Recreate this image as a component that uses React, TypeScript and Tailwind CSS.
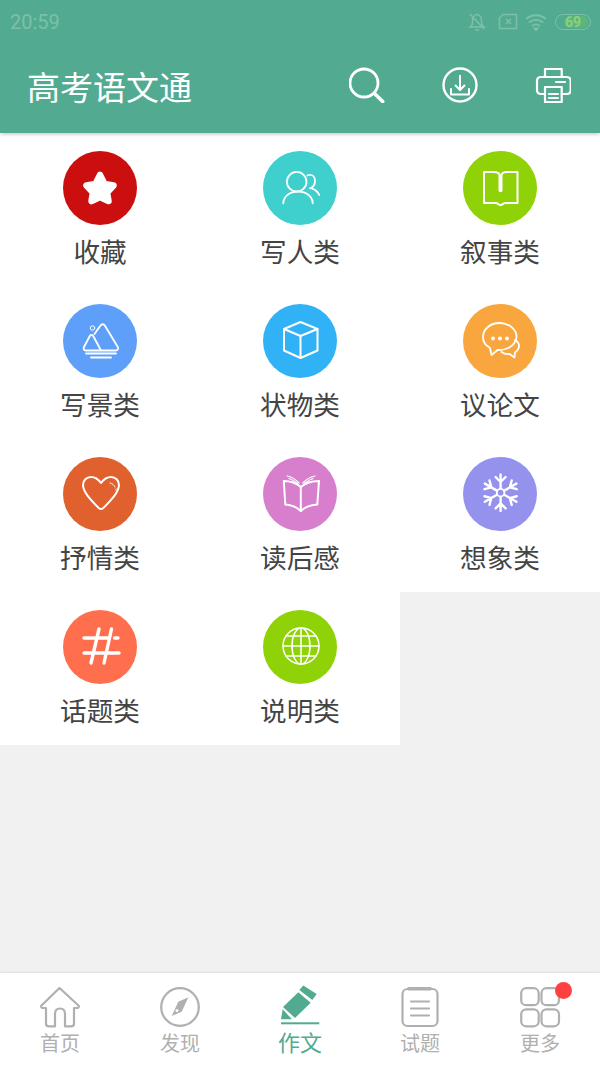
import React from "react";

const white = { fill: "none", stroke: "#fff", strokeLinecap: "round", strokeLinejoin: "round" } as const;

const StarIcon = () => (
  <polygon
    points="37,24 41.5,33 50.5,34.5 44,41.5 45.5,50 37,46 28.5,50 30,41.5 23.5,34.5 32.5,33"
    fill="#fff"
    stroke="#fff"
    strokeWidth="6.500"
    strokeLinejoin="round"
  />
);

const PeopleIcon = () => (
  <g {...white} strokeWidth="1.800">
    <circle cx="33.700" cy="30.700" r="9.800" />
    <path d="M20.300 52.300c0-6.800 6-11.600 14.700-11.600s14.700 4.800 14.700 11.600" />
    <path d="M44.300 24.500c1-.5 1.800-.7 2.700-.7 3 0 5 2.800 5 6 0 3.500-2 6.500-5 7.500" />
    <path d="M48.700 37.300c3.500 1.200 6.300 3.700 7.600 6.700" />
  </g>
);

const BookIcon = () => (
  <g {...white} strokeWidth="2">
    <path d="M21 21h10c3 0 5 1 5.500 3v15.500c0 1 2 1 2 0V24c.5-2 2.500-3 5-3h11v31H42c-1.500 0-2.500 2-4.500 2s-3-2-4.500-2H21z" />
  </g>
);

const ScenicIcon = () => (
  <g {...white} strokeWidth="1.800">
    <circle cx="29.500" cy="24" r="2.200" strokeWidth="1" />
    <path d="M31.500 30l6-8.500c1.200-1.700 3.300-1.700 4.300 0l13 21.500c1 2-.2 3.500-2 3.500H23c-2 0-3-1.500-2-3.500l5.500-10.500c1-2 3-2 4 0L38 46.500" />
    <path d="M23 49.500h30M28 53.500h20" />
  </g>
);

const CubeIcon = () => (
  <g {...white} strokeWidth="2">
    <path d="M37.500 18L54.500 25V46.500L37.500 54 21 46.500V25z" />
    <path d="M21 25l16.500 7 17-7M37.500 32v22" />
  </g>
);

const ChatIcon = () => (
  <g>
    <g {...white} strokeWidth="1.800">
      <path d="M36.500 19C27.500 19 20 25 20 33c0 4.500 2.500 8.500 7 11l1.500 7 6-5c.7 0 1.300 0 2 0 9 0 17-6 17-13.500S45.500 19 36.500 19z" />
      <path d="M52 36c3 1.500 4 3.500 4 6 0 3-2 5-4 6.500l-.5 5-5-3.500c-3 .5-6-.5-8-2" />
    </g>
    <circle cx="30" cy="34.500" r="2" fill="#fff" />
    <circle cx="37" cy="34.500" r="2" fill="#fff" />
    <circle cx="44" cy="34.500" r="2" fill="#fff" />
  </g>
);

const HeartIcon = () => (
  <g {...white} strokeWidth="2">
    <path d="M38 52c-1 0-2-.5-3-1.700C28 43 20 35 20 28c0-4.500 3.500-8 8-8 4 0 7.500 2.500 10 6 2.500-3.500 6-6 10-6 4.500 0 8 3.500 8 8 0 7-8 15-15 22.300-1 1.200-2 1.700-3 1.700z" />
    <path d="M47 26c2.500.5 4 2 5 4" strokeWidth="1" />
    <path d="M53 32v1" strokeWidth="1" />
  </g>
);

const OpenBookIcon = () => (
  <g {...white} strokeWidth="2">
    <path d="M37.800 30c-4-3.500-10-6-17-6l1.500 23.500c6 .5 11.500 2.500 15.500 6.500 4-4 9.500-6 16.500-6.500L56 24c-7.500 0-14 2.500-18.200 6z" />
    <path d="M37.800 30v24" />
    <path d="M24 19c4.500 1 9 3.500 12 7M26 21.500c3 1 6 3 8.500 5M52 19c-4.500 1-9 3.500-12 7M50 21.500c-3 1-6 3-8.500 5" strokeWidth="1.200" />
  </g>
);

const SnowflakeIcon = () => (
  <g {...white} strokeWidth="2.400">
    <circle cx="37.600" cy="35.700" r="3.800" strokeWidth="1.800" />
    {[0, 60, 120, 180, 240, 300].map((deg) => (
      <g key={deg} transform={`rotate(${deg} 37.600 35.700)`}>
        <path d="M37.600 31.500V17.500M37.600 25l-5-5M37.600 25l5-5" />
      </g>
    ))}
  </g>
);

const HashIcon = () => (
  <g {...white} strokeWidth="3.400">
    <path d="M21 28h24M51.500 28h3.500M21 43h35M36 19L28 53M48.500 19L41 53" />
  </g>
);

const GlobeIcon = () => (
  <g {...white} strokeWidth="1.500">
    <circle cx="38" cy="36" r="18" />
    <ellipse cx="38" cy="36" rx="9" ry="18" />
    <path d="M38 18v36M20 36h36M23 26h30M23 46h30" />
  </g>
);

const categories = [
  { label: "收藏", bg: "bg-[#cb0e0e]", icon: <StarIcon /> },
  { label: "写人类", bg: "bg-[#3fcfcd]", icon: <PeopleIcon /> },
  { label: "叙事类", bg: "bg-[#8fd208]", icon: <BookIcon /> },
  { label: "写景类", bg: "bg-[#5e9ffa]", icon: <ScenicIcon /> },
  { label: "状物类", bg: "bg-[#31b2f6]", icon: <CubeIcon /> },
  { label: "议论文", bg: "bg-[#f8a63d]", icon: <ChatIcon /> },
  { label: "抒情类", bg: "bg-[#e0602e]", icon: <HeartIcon /> },
  { label: "读后感", bg: "bg-[#d77fcd]", icon: <OpenBookIcon /> },
  { label: "想象类", bg: "bg-[#9492ed]", icon: <SnowflakeIcon /> },
  { label: "话题类", bg: "bg-[#ff6f4d]", icon: <HashIcon /> },
  { label: "说明类", bg: "bg-[#8fd208]", icon: <GlobeIcon /> },
];

const gray = { fill: "none", stroke: "#b0b0b0", strokeWidth: 2.200, strokeLinejoin: "round", strokeLinecap: "round" } as const;

const tabs = [
  {
    label: "首页",
    icon: (
      <path
        {...gray}
        d="M19.500 1L38.500 18.500c.8 1 .2 2.500-1.200 2.500H34v15.500c0 1.800-1 2.800-2.800 2.800H25V27c0-3.500-2-5.500-5-5.500S15 23.500 15 27v12.300H8.800C7 39.300 6 38.300 6 36.500V21H2.700C1.300 21 .7 19.500 1.500 18.500z"
      />
    ),
  },
  {
    label: "发现",
    icon: (
      <g>
        <circle cx="20" cy="20" r="18.800" {...gray} />
        <path d="M28.300 10.300L18.300 14.700 11.700 29l10-4.300z" fill="#b0b0b0" />
        <circle cx="17" cy="23.500" r="1.500" fill="#fff" />
      </g>
    ),
  },
  {
    label: "作文",
    active: true,
    icon: (
      <g fill="#52ab90">
        <path d="M23.300-1.500L36.700 7 32.300 13 19.300 3z" />
        <path d="M18.300 5.300L30.700 15.700 15 31 3 20z" />
        <path d="M2.700 22.300L12 32.300 1 32.300z" />
        <rect x="1" y="35.300" width="38.300" height="2" />
      </g>
    ),
  },
  {
    label: "试题",
    icon: (
      <g>
        <rect x="2.500" y="2" width="35" height="37" rx="5" {...gray} />
        <rect x="7.500" y="0" width="24" height="3.500" rx="1" fill="#b0b0b0" />
        <path d="M11 14.500h18M11 21.500h18M11 28.500h18" {...gray} />
      </g>
    ),
  },
  {
    label: "更多",
    icon: (
      <g {...gray}>
        <rect x="1.200" y="1.200" width="17.500" height="17" rx="5" />
        <rect x="21.500" y="1.200" width="17.500" height="17" rx="5" />
        <rect x="1.200" y="22.300" width="17.500" height="17" rx="5" />
        <rect x="21.500" y="22.300" width="17.500" height="17" rx="5" />
      </g>
    ),
  },
];

export default function App() {
  return (
    <div className="flex h-[1067px] w-[600px] flex-col overflow-hidden bg-[#f1f1f1] font-['Noto_Sans_CJK_SC','Noto_Sans',sans-serif]">
      <header className="relative z-10 h-[133px] shrink-0 bg-[#52ab90] shadow-[0_1px_4px_rgba(0,0,0,0.25)]">
        <div className="flex h-[44px] items-center justify-between pl-[10px] pr-[9px] text-[#7cc0aa]">
          <span className="font-['Roboto',sans-serif] text-[20px] leading-none">20:59</span>
          <div className="flex items-center">
            <svg width="20" height="20" viewBox="0 0 20 20" fill="none" stroke="#7cc0aa" strokeWidth="1.500">
              <path d="M3 15c1.500-1 2.500-2 2.500-4V8c0-3 2.500-5.500 4.500-5.500S14.500 5 14.500 8v3c0 2 1 3 2.500 4zM8 18h4M3 2l14 15" />
            </svg>
            <svg width="20" height="18" viewBox="0 0 20 18" fill="none" stroke="#7cc0aa" strokeWidth="1.500" className="ml-[11px]">
              <path d="M5 1.500h13.500v14H1.500V5zM8 6l5 5M13 6l-5 5" />
            </svg>
            <svg width="22" height="18" viewBox="0 0 22 18" fill="none" stroke="#7cc0aa" strokeWidth="1.800" className="ml-[7px]">
              <path d="M1 6c6-5 14-5 20 0M4 9.500c4-3.500 10-3.500 14 0M7 13c2.500-2 5.500-2 8 0" />
              <path d="M9.500 15.500l1.500 2 1.500-2z" fill="#7cc0aa" />
            </svg>
            <div className="relative ml-[8px] h-[16px] w-[36px] overflow-hidden rounded-full border border-[#7cc0aa]">
              <div className="absolute inset-y-[1px] left-[8px] w-[24px] rounded-full bg-[#5db57a]" />
              <span className="absolute inset-0 text-center font-['Roboto',sans-serif] text-[14px] leading-[14px] font-bold text-[#8fce83]">69</span>
            </div>
          </div>
        </div>
        <div className="flex items-center justify-between pt-[4px] pl-[27px] pr-[29px]">
          <h1 className="text-[33px] leading-[76px] font-normal text-white">高考语文通</h1>
          <div className="mb-[2px] flex items-center gap-[57px]">
            <svg width="36" height="36" viewBox="0 0 36 36" fill="none" stroke="#fff" strokeLinecap="round">
              <circle cx="15" cy="16" r="14" strokeWidth="2.800" />
              <path d="M25.500 26.500l8.200 8" strokeWidth="3.600" />
            </svg>
            <svg width="36" height="36" viewBox="0 0 36 36" fill="none" stroke="#fff" strokeWidth="2.400" strokeLinecap="round" strokeLinejoin="round">
              <circle cx="18" cy="18" r="16.500" />
              <path d="M18 8.700v14M13.500 18.500l4.500 4.500 4.500-4.500M9 22v5.500h18V22" strokeWidth="2" />
            </svg>
            <svg width="36" height="36" viewBox="0 0 36 36" fill="none" stroke="#fff" strokeWidth="2.200" strokeLinejoin="round" strokeLinecap="round">
              <path d="M10 10V2h16.700v8" />
              <path d="M10 27H6c-2.500 0-4-1.500-4-4v-9c0-2.500 1.500-4 4-4h25.700c2.500 0 4 1.500 4 4v9c0 2.500-1.500 4-4 4h-5" />
              <path d="M10 20h16.700v15H10zM14 27h9M14 31h9M21 15h9" />
            </svg>
          </div>
        </div>
      </header>

      <main className="grid flex-1 grid-cols-3 content-start">
        {categories.map((c) => (
          <div key={c.label} className="flex h-[153px] flex-col items-center bg-white pt-[18px]">
            <div className={`h-[74px] w-[74px] rounded-full ${c.bg}`}>
              <svg width="74" height="74" viewBox="0 0 74 74">
                {c.icon}
              </svg>
            </div>
            <span className="mt-[7px] text-[26.6px] leading-[38px] text-[#444]">{c.label}</span>
          </div>
        ))}
      </main>

      <nav className="grid h-[94px] shrink-0 grid-cols-5 bg-white shadow-[0_-1px_2px_rgba(0,0,0,0.08)]">
        {tabs.map((t) => (
          <div key={t.label} className="relative flex flex-col items-center pt-[14px]">
            <svg width="40" height="41" viewBox="0 0 40 41" className="overflow-visible">
              {t.icon}
            </svg>
            <span
              className={
                t.active
                  ? "-mt-[1px] text-[22px] leading-[28px] text-[#52ab90]"
                  : "mt-[1px] text-[20px] leading-[28px] text-[#b0b0b0]"
              }
            >
              {t.label}
            </span>
            {t.label === "更多" && (
              <div className="absolute top-[9px] left-[75px] h-[17px] w-[17px] rounded-full bg-[#ff4040]" />
            )}
          </div>
        ))}
      </nav>
    </div>
  );
}
